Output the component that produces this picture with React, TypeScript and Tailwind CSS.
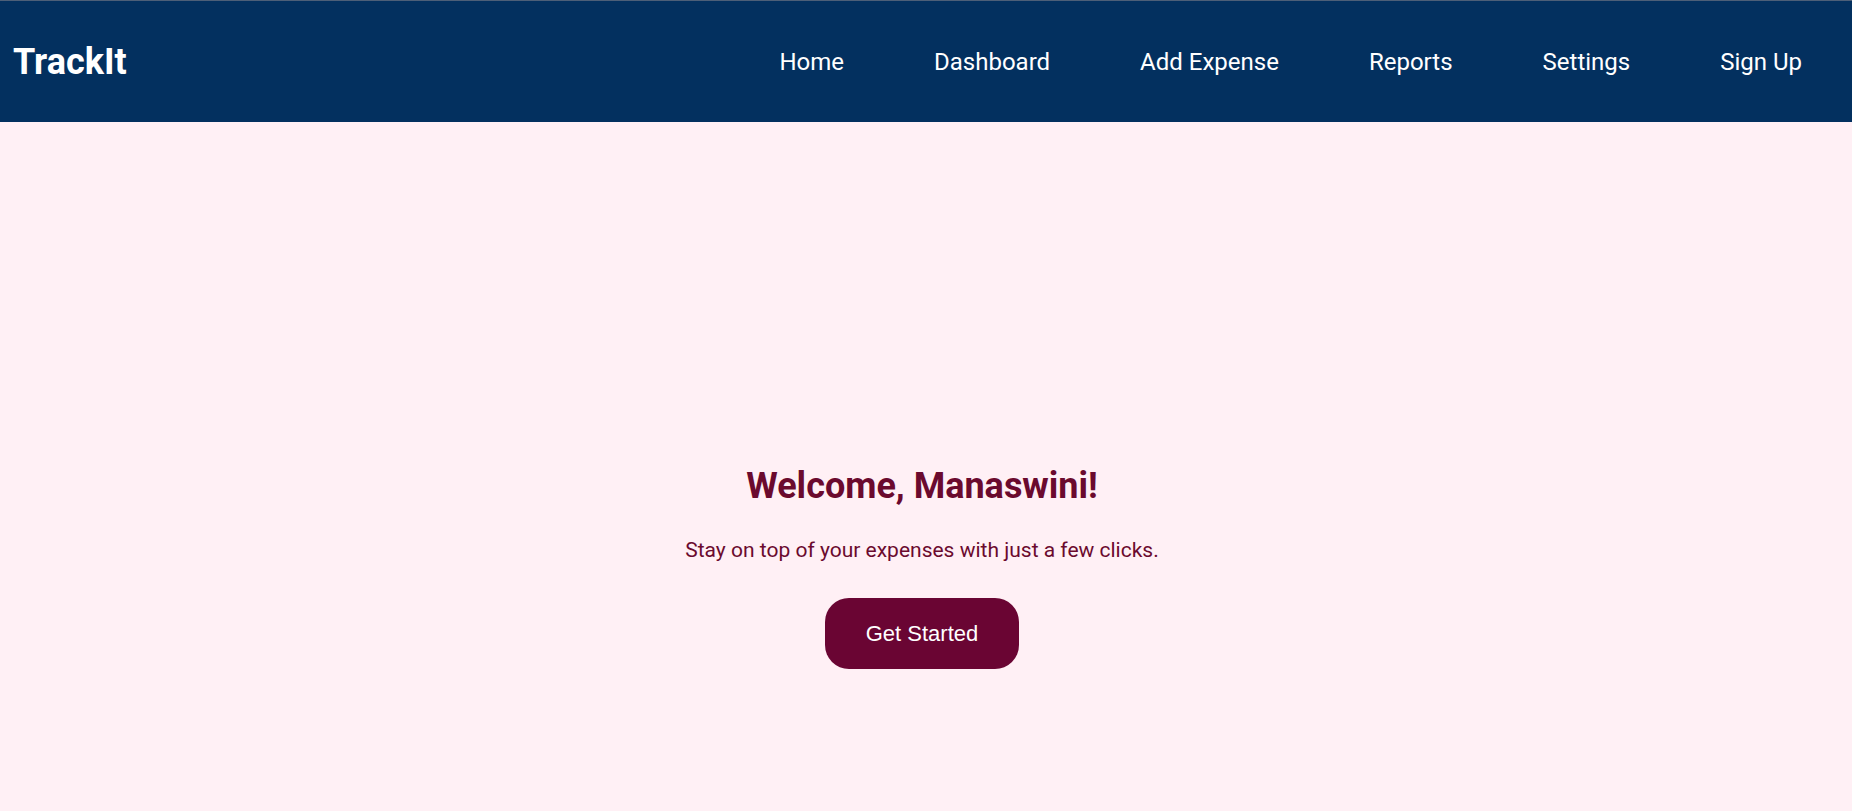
const NAV_LINKS = ["Home", "Dashboard", "Add Expense", "Reports", "Settings", "Sign Up"];

export default function App() {
    return (
        <div className="min-h-screen bg-[#fff0f5] font-['Roboto',sans-serif]">
            {/* Top bar */}
            <header className="flex h-[122px] items-center justify-between border-t border-[#4d5f78] bg-[#03305f] pl-[13px] pr-[50px]">
                <div className="text-[36px] font-bold leading-none text-white">TrackIt</div>
                <nav className="flex items-center gap-[90px]">
                    {NAV_LINKS.map((link) => (
                        <a key={link} href="#" className="text-[24px] leading-none text-white">
                            {link}
                        </a>
                    ))}
                </nav>
            </header>

            {/* Hero */}
            <main className="flex flex-col items-center pr-[8px] pt-[343px] text-center">
                <h1 className="text-[36px] font-bold leading-[42px] text-[#6b0a2e]">Welcome, Manaswini!</h1>
                <p className="mt-[30px] text-[21px] leading-[26px] text-[#6b0a2e]">
                    Stay on top of your expenses with just a few clicks.
                </p>
                <button className="mt-[35px] h-[71px] rounded-[24px] bg-[#6a0533] px-[41px] font-['Liberation_Sans',sans-serif] text-[22px] text-white">
                    Get Started
                </button>
            </main>
        </div>
    );
}
